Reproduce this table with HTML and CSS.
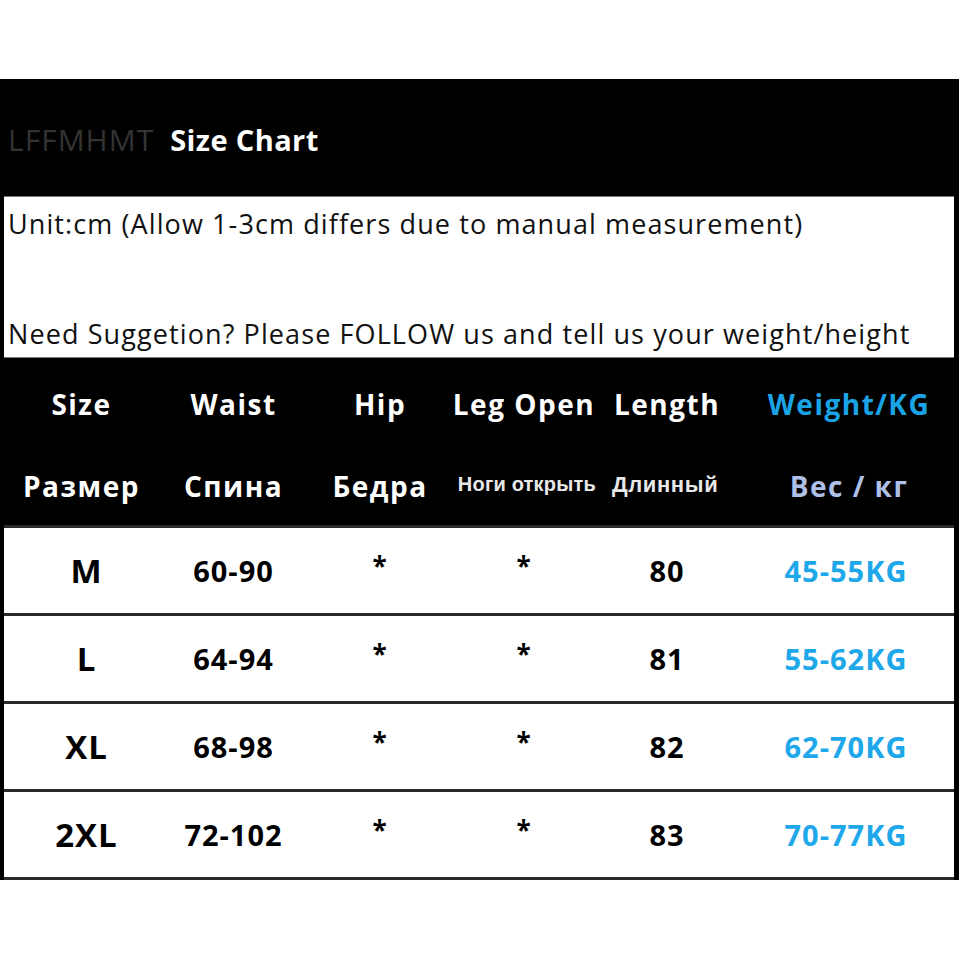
FILE: index.html
```html
<!DOCTYPE html>
<html>
<head>
<meta charset="utf-8">
<link rel="stylesheet" href="styles.css">
</head>
<body>
<div class="chart">
  <div class="title"><span class="brand">LFFMHMT</span><span class="title-text">Size Chart</span></div>
  <div class="info">
    <p class="info-line">Unit:cm (Allow 1-3cm differs due to manual measurement)</p>
    <p class="info-line">Need Suggetion? Please FOLLOW us and tell us your weight/height</p>
  </div>
  <div class="head">
    <div class="row head-row en">
      <div class="cell">Size</div>
      <div class="cell">Waist</div>
      <div class="cell">Hip</div>
      <div class="cell">Leg Open</div>
      <div class="cell">Length</div>
      <div class="cell blue">Weight/KG</div>
    </div>
    <div class="row head-row ru">
      <div class="cell">Размер</div>
      <div class="cell">Спина</div>
      <div class="cell">Бедра</div>
      <div class="cell small leg"><span>Ноги открыть</span></div>
      <div class="cell small len">Длинный</div>
      <div class="cell pale">Вес / кг</div>
    </div>
  </div>
  <div class="body">
    <div class="row data-row">
      <div class="cell size">M</div>
      <div class="cell">60-90</div>
      <div class="cell star">*</div>
      <div class="cell star">*</div>
      <div class="cell">80</div>
      <div class="cell kg">45-55KG</div>
    </div>
    <div class="row data-row">
      <div class="cell size">L</div>
      <div class="cell">64-94</div>
      <div class="cell star">*</div>
      <div class="cell star">*</div>
      <div class="cell">81</div>
      <div class="cell kg">55-62KG</div>
    </div>
    <div class="row data-row">
      <div class="cell size">XL</div>
      <div class="cell">68-98</div>
      <div class="cell star">*</div>
      <div class="cell star">*</div>
      <div class="cell">82</div>
      <div class="cell kg">62-70KG</div>
    </div>
    <div class="row data-row last">
      <div class="cell size">2XL</div>
      <div class="cell">72-102</div>
      <div class="cell star">*</div>
      <div class="cell star">*</div>
      <div class="cell">83</div>
      <div class="cell kg">70-77KG</div>
    </div>
  </div>
</div>
</body>
</html>
```

FILE: styles.css
```css
html, body {
  margin: 0;
  padding: 0;
  background: #ffffff;
}
body {
  font-family: "Open Sans", "Lato", sans-serif;
}
.chart {
  margin-top: 79px;
  width: 959px;
  background: #000000;
  padding: 0 5px 0 4px;
  box-sizing: border-box;
}
.title {
  height: 117px;
  display: flex;
  align-items: center;
  padding-left: 4px;
  padding-top: 4px;
  box-sizing: border-box;
}
.brand {
  color: #333333;
  font-size: 30px;
  font-weight: 400;
  letter-spacing: 1px;
}
.title-text {
  color: #ffffff;
  font-size: 29px;
  font-weight: 700;
  letter-spacing: 0.4px;
  margin-left: 16px;
}
.info {
  background: #ffffff;
  height: 162px;
  border-top: 1px solid #777;
  border-bottom: 1px solid #777;
  box-sizing: border-box;
  padding: 7px 0 0 4px;
}
.info-line {
  margin: 0;
  font-size: 27px;
  color: #111;
  line-height: 40px;
  letter-spacing: 1.1px;
}
.info-line + .info-line {
  margin-top: 70px;
}
.row {
  display: grid;
  grid-template-columns: 155px 149px 144px 144px 142px 1fr;
}
.cell {
  display: flex;
  align-items: center;
  justify-content: center;
  white-space: nowrap;
}
.head {
  height: 167px;
  padding-top: 2px;
  box-sizing: border-box;
}
.head-row {
  color: #ffffff;
  font-weight: 700;
  font-size: 28px;
  letter-spacing: 1.5px;
}
.head-row.en {
  height: 88px;
}
.head-row.ru {
  height: 76px;
}
.blue {
  color: #1aa4e6;
  padding-left: 6px;
}
.pale {
  color: #aebfe8;
  padding-left: 6px;
}
.small {
  font-family: "Liberation Sans", Arial, sans-serif;
  font-size: 22px;
  font-weight: 700;
  letter-spacing: 0.6px;
  color: #e8e8e8;
  padding-bottom: 3px;
  box-sizing: border-box;
}
.leg {
  font-size: 20px;
  letter-spacing: 0.2px;
  justify-content: flex-end;
}
.len {
  justify-content: flex-start;
  padding-left: 16px;
}
.body {
  background: #ffffff;
}
.data-row {
  height: 88px;
  border-top: 3px solid #2a2a2a;
  box-sizing: border-box;
  background: #ffffff;
  font-weight: 700;
  font-size: 29px;
  letter-spacing: 1px;
  color: #000;
}
.data-row.last {
  height: 91px;
  border-bottom: 3px solid #2a2a2a;
}
.size {
  font-size: 33px;
  padding-left: 10px;
}
.star {
  font-size: 26px;
  align-items: flex-start;
  padding-top: 20px;
  box-sizing: border-box;
}
.kg {
  color: #1ea8ea;
}
```
